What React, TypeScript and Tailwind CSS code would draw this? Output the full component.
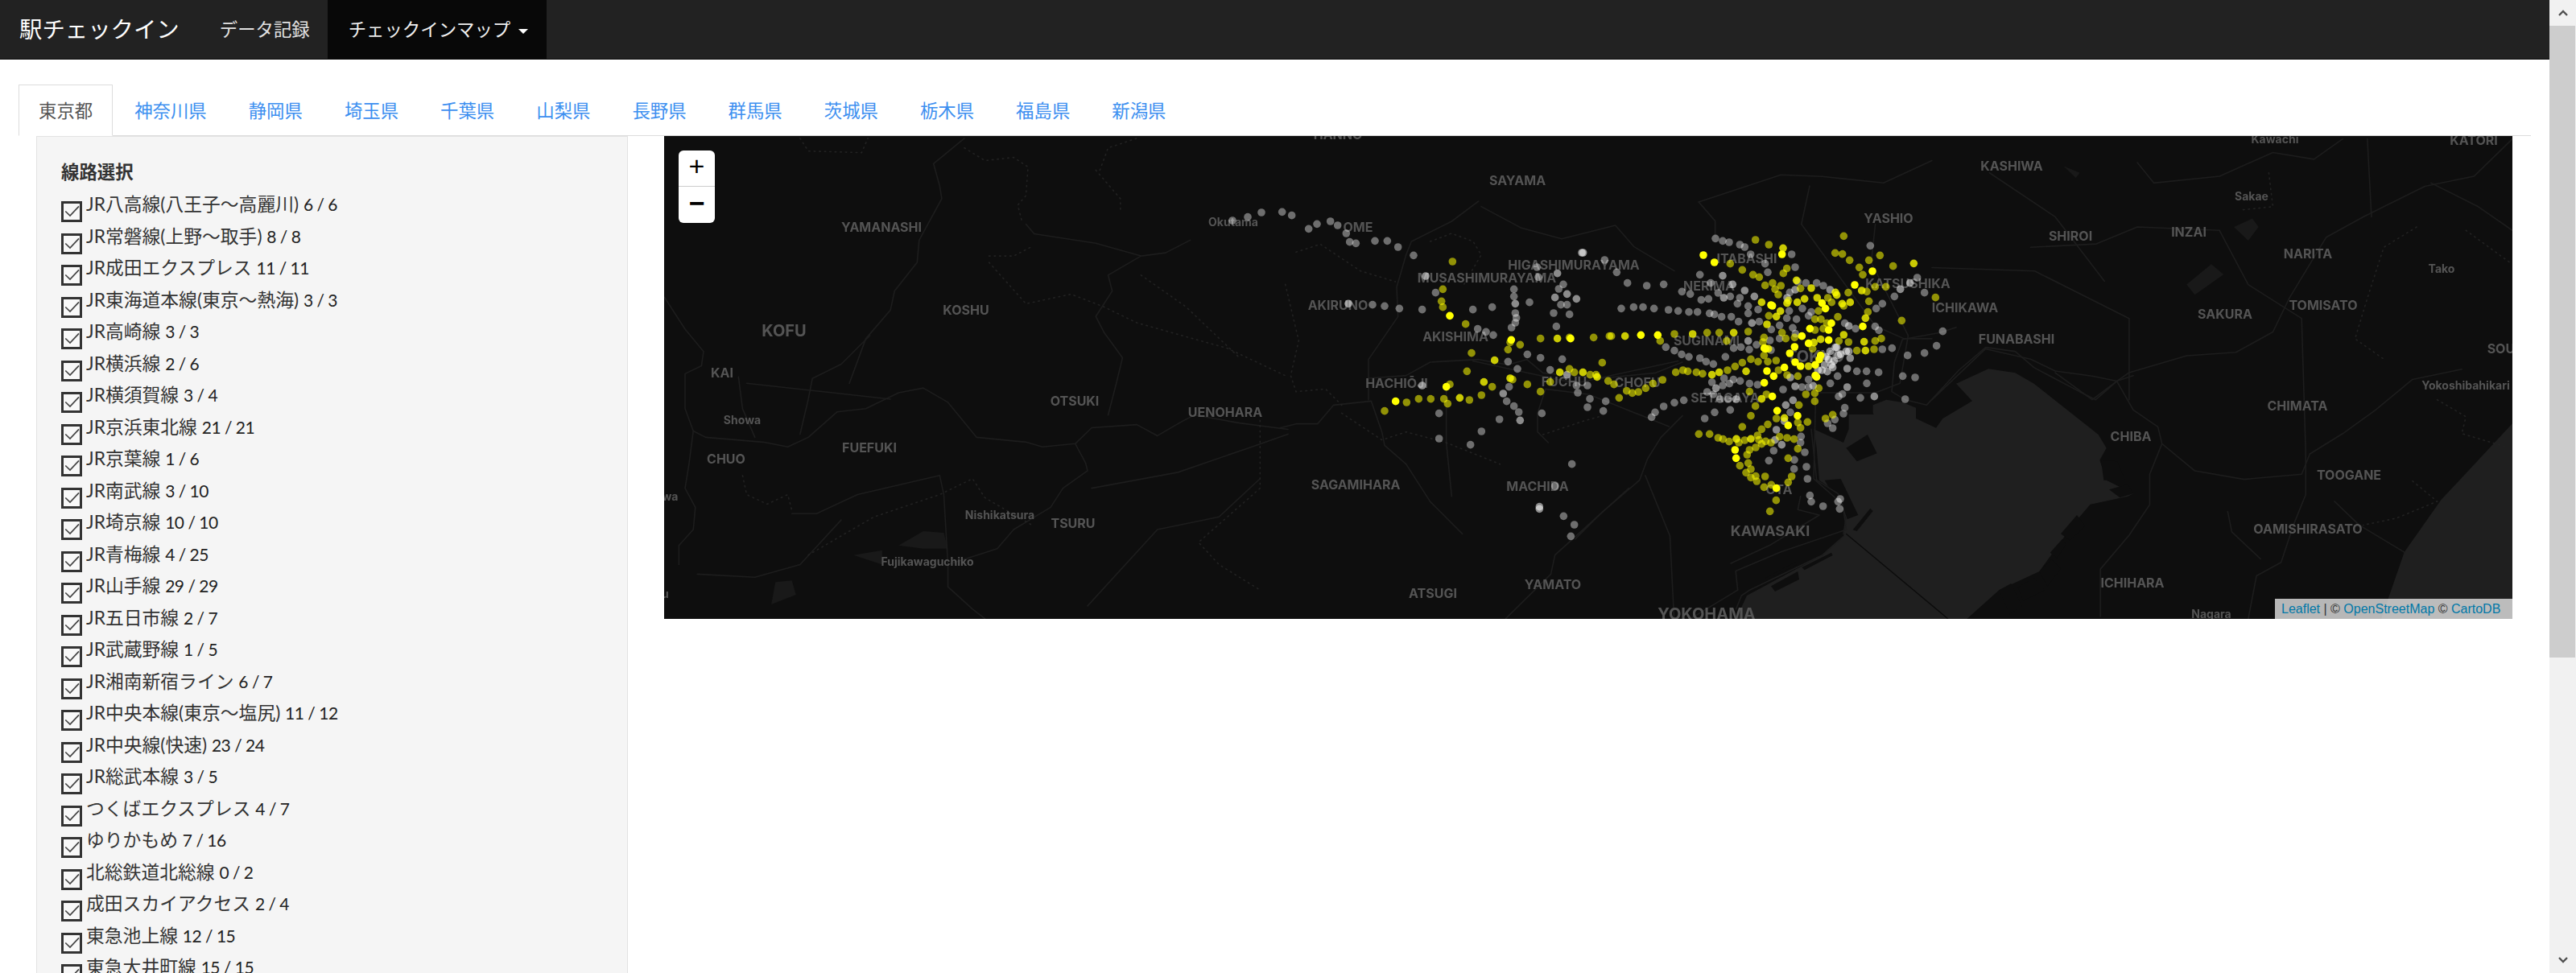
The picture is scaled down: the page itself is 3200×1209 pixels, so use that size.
const prefectures = ["東京都", "神奈川県", "静岡県", "埼玉県", "千葉県", "山梨県", "長野県", "群馬県", "茨城県", "栃木県", "福島県", "新潟県"]

const lines = [
  ["JR八高線(八王子～高麗川)", "6 / 6"],
  ["JR常磐線(上野～取手)", "8 / 8"],
  ["JR成田エクスプレス", "11 / 11"],
  ["JR東海道本線(東京～熱海)", "3 / 3"],
  ["JR高崎線", "3 / 3"],
  ["JR横浜線", "2 / 6"],
  ["JR横須賀線", "3 / 4"],
  ["JR京浜東北線", "21 / 21"],
  ["JR京葉線", "1 / 6"],
  ["JR南武線", "3 / 10"],
  ["JR埼京線", "10 / 10"],
  ["JR青梅線", "4 / 25"],
  ["JR山手線", "29 / 29"],
  ["JR五日市線", "2 / 7"],
  ["JR武蔵野線", "1 / 5"],
  ["JR湘南新宿ライン", "6 / 7"],
  ["JR中央本線(東京～塩尻)", "11 / 12"],
  ["JR中央線(快速)", "23 / 24"],
  ["JR総武本線", "3 / 5"],
  ["つくばエクスプレス", "4 / 7"],
  ["ゆりかもめ", "7 / 16"],
  ["北総鉄道北総線", "0 / 2"],
  ["成田スカイアクセス", "2 / 4"],
  ["東急池上線", "12 / 15"],
  ["東急大井町線", "15 / 15"],
]

// traced from crops of the map: [left, top, x scale, y scale]
type View = [number, number, number, number]
const WEST: View = [800, 160, 1.96, 2.53]
const MID: View = [1600, 160, 1.96, 2.53]
const EAST: View = [2400, 160, 1.96, 2.376]
const DOTS_W: View = [1590, 250, 3, 3]
const DOTS_C: View = [2000, 260, 3, 3]
const BAY: View = [2150, 400, 3, 3]

function pts(v: View, s: string) {
  return s.trim().split(/\s+/).map((p) => {
    const [a, b] = p.split(",")
    return [v[0] + Number(a) / v[2], v[1] + Number(b) / v[3]]
  })
}
const poly = (v: View, s: string) => pts(v, s).map((p) => p.join(",")).join(" ")

const roads: [View, string][] = [
  [WEST, "120,950 150,970 290,985 350,1000 400,970 470,890 540,880 620,830 680,815 740,860 810,970 930,985 970,1000 1050,990 1090,940 1200,930 1250,965 1310,920 1340,900 1450,925 1568,945"],
  [WEST, "50,530 100,630 145,700 140,745 100,770 100,880 120,950 110,1050 100,1130 125,1190 120,1260 85,1310 85,1370"],
  [WEST, "550,650 480,740 410,785 400,850 380,960"],
  [WEST, "780,30 705,110 720,180 725,220 670,350 665,420 610,510 600,570 540,660 500,800"],
  [WEST, "1050,990 1075,1050 1080,1075 1020,1130 990,1190 900,1260 860,1320 740,1370 740,1440 800,1510 830,1540"],
  [WEST, "1330,350 1270,390 1210,400 1130,460 1140,510 1100,590 1120,640 1165,720 1150,800 1130,900"],
  [WEST, "230,780 240,880 270,970"],
  [WEST, "250,800 460,830 600,850"],
  [WEST, "930,300 950,330 1100,360 1210,400"],
  [WEST, "360,1210 420,1210 520,1150 720,1090 730,1150 740,1370"],
  [WEST, "130,1400 270,1410 380,1370 480,1230"],
  [WEST, "1090,1130 1300,1080 1480,1000 1568,960"],
  [WEST, "1080,1500 1250,1260 1400,1220 1500,1100"],
  [DOTS_W, "0,845 60,830 140,830 200,760 340,745 380,860 390,910 470,980 560,1120 680,1240"],
  [DOTS_W, "740,0 640,75 490,150 470,200 435,320 440,430 330,590 330,740"],
  [DOTS_W, "330,660 470,650 560,600 740,590 850,610 920,590 980,640 1200,660 1400,640 1500,600"],
  [DOTS_W, "750,20 900,100 1050,140 1250,90 1320,170 1470,260"],
  [DOTS_W, "1500,800 1420,880 1370,960 1340,1040 1200,1160 1100,1260"],
  [DOTS_W, "1450,840 1150,720 990,700 960,790 960,860 1000,900"],
  [DOTS_W, "620,700 620,900 640,1100"],
  [MID, "1000,230 1200,145 1300,150 1450,170 1568,100"],
  [MID, "1000,230 1040,290 1040,340"],
  [MID, "1270,180 1250,300 1430,620 1500,660 1568,660"],
  [MID, "1430,300 1420,420 1510,650 1490,800 1430,830 1285,830"],
  [MID, "1285,830 1280,1100 1350,1180 1360,1260 1200,1330 1090,1390 1095,1450 980,1540"],
  [MID, "870,1090 930,1280 940,1540"],
  [MID, "830,1130 650,1340 640,1400 530,1540"],
  [MID, "950,730 700,800 450,730"],
  [BAY, "640,65 610,150 600,260 650,290 730,310 850,180 950,95 1060,110 1130,170 1300,260 1360,290 1440,220 1500,200"],
  [BAY, "840,20 780,40 640,65"],
  [BAY, "420,790 430,730 400,640 320,590 300,400"],
  [BAY, "420,800 340,870 70,1000 40,1020 20,1070"],
  [BAY, "0,900 150,830 330,720 250,700 260,650"],
  [EAST, "0,800 130,650 240,680 300,715 390,730 450,745 480,720 620,670 740,660 830,600 870,500 960,320 1050,260 1200,170 1320,140 1413,30"],
  [EAST, "450,745 390,800 300,720"],
  [EAST, "450,745 490,830 550,880 560,930 530,1020 530,1110 480,1200 410,1300 410,1440"],
  [EAST, "560,930 640,1010 760,1035 900,1020 920,960 1000,900 1080,830 1170,740 1290,710"],
  [EAST, "910,960 910,1080 880,1170 850,1280 790,1320 770,1447"],
  [EAST, "720,1130 730,1190 800,1270"],
  [EAST, "1215,160 1330,230 1413,300"],
  [EAST, "1060,30 1070,260"],
  [EAST, "980,1100 1040,1170 1150,1250"],
  [EAST, "500,100 540,160 700,140 830,70 930,90 1000,30"],
  [EAST, "240,350 400,340 500,290 700,300"],
  [EAST, "0,410 250,420 480,560 480,800"],
  [EAST, "140,130 300,260 420,450"],
  [EAST, "700,300 770,460 900,560 910,960"],
]

const trails: [View, string][] = [
  [WEST, "380,30 400,70 530,75 545,30"],
  [WEST, "780,60 830,100 900,90 935,120 930,210 910,240 920,290"],
  [WEST, "1110,130 1130,60 1200,30"],
  [WEST, "1100,130 1160,220 1160,260"],
  [WEST, "840,400 900,400 945,370"],
  [WEST, "840,420 930,550 1040,520 1120,560 1200,610 1420,690 1568,780"],
  [WEST, "1210,460 1320,560 1450,720"],
  [WEST, "240,1090 250,1150 300,1180 350,1150 360,1200"],
  [WEST, "400,1340 560,1220 720,1150 800,1100 830,1160 950,1250"],
  [WEST, "1500,900 1500,1130 1350,1300 1400,1370 1500,1450"],
  [DOTS_W, "60,190 150,160 300,260 430,300"],
  [DOTS_W, "20,310 70,520 40,650 60,710 170,700 230,760"],
  [DOTS_W, "230,790 380,890 470,860 620,900 820,980"],
  [DOTS_W, "560,150 640,120 720,150 750,200 680,320"],
  [DOTS_W, "980,870 1130,820 1200,800"],
  [EAST, "1180,290 1100,350 1060,500 1030,620 1100,680"],
  [EAST, "1300,300 1413,400"],
  [EAST, "820,130 830,230 750,240"],
  [EAST, "1170,1040 1230,1100 1130,1150 1050,1170"],
  [EAST, "1230,800 1300,850 1290,900 1400,940"],
]

const water: [View, string][] = [
  [BAY, "310,400 320,470 330,590 400,640 430,730 420,800 340,870 60,1020 20,1107 880,1107 1000,1000 1150,930 1280,750 1340,680 1480,650 1500,640 1400,590 1375,515 1400,470 1370,420 1130,230 1060,190 960,175 840,230 900,295 790,360 765,395 690,360 690,320 640,300 580,290 530,310 530,340 575,410 540,345 440,345 440,400 420,450"],
  [EAST, "1413,870 1240,1095 1150,1250 1110,1390 1090,1460 1413,1460"],
]

const lakes: [View, string][] = [
  [WEST, "620,1310 680,1265 730,1270 740,1320 680,1320"],
  [WEST, "510,1340 580,1325 580,1370"],
  [WEST, "320,1425 360,1420 370,1465 310,1495"],
  [EAST, "735,290 780,265 795,290 770,330"],
  [EAST, "620,460 680,400 710,430 640,490"],
  [EAST, "320,110 360,130 350,145"],
]

const islands = [
  "430,470 510,420 545,490 470,520",
  "350,590 410,585 475,720 435,735",
  "455,775 520,695 530,705 470,780",
  "150,985 250,930 255,960 165,1005",
  "130,955 240,895 245,905 135,960",
  "265,915 375,860 380,870 275,925",
  "1070,990 1130,955 1170,1000 1090,1040",
  "1000,1000 1045,975 1085,1060 1040,1090",
  "1150,930 1195,885 1230,920 1180,985",
  "1190,860 1235,810 1250,830 1215,880",
  "1230,790 1290,720 1320,760 1265,815",
  "1380,515 1440,520 1470,590 1390,590",
  "1410,625 1480,605 1500,640 1450,655",
]

const grayW = "8,40 44,53 107,103 138,85 188,75 215,90 247,120 260,152 283,157 354,148 400,148 440,171 498,202 580,341 345,386 390,391 445,400 530,404 719,404 791,395 737,476 768,487 795,499 872,328 872,355 877,417 881,435 877,453 863,471 930,377 958,246 963,283 1056,310 1039,327 1047,386 1070,386 1020,417 1079,422 1030,467 1210,219 922,571 971,584 850,598 885,625 1052,589 1007,629 1105,687 1146,687 1110,714 1155,737 1214,746 1146,768 1205,782 854,692 845,746 872,764 890,786 818,813 976,791 593,791 751,858 593,885 710,908 1088,980 1025,1062 1057,1174 1097,1206 1084,1249 -177,72 -120,59 -69,42"
const lightW = "543,279 255,382 877,382 1034,269 1025,359 1070,346 1105,364 1125,192 1130,192 1070,647 832,717 895,817 967,1139 967,1147 530,687"
const brightW = "633,427 862,517 1083,512 620,692 431,746"
const midW = "1034,512 800,593 1129,638 1043,638 760,674 670,733 858,660 1182,655"
const dimW = "643,225 607,328 602,373 607,395 692,458 858,526 850,553 895,535 971,512 1079,508 1169,508 1228,503 714,566 1201,602 1079,625 1097,638 1156,647 1178,647 697,634 633,683 791,692 867,665 922,683 1007,674 1223,670 971,710 390,782 472,750 517,737 562,737 611,737 625,755 706,741 751,723"

const grayC = "393,109 420,118 444,123 484,132 502,141 524,168 578,203 588,235 690,216 677,168 335,244 25,235 65,275 137,285 200,280 268,307 299,316 375,275 403,312 448,325 484,330 340,338 367,334 475,352 515,361 552,374 515,388 42,370 88,365 123,365 164,370 218,375 254,379 294,383 326,383 371,388 389,392 416,401 452,401 479,419 556,419 601,448 632,433 208,514 240,527 267,541 294,550 335,555 358,568 385,577 430,550 461,518 488,514 519,523 546,505 596,489 632,482 600,525 659,406 695,410 681,442 691,464 717,370 668,379 740,397 750,383 970,136 670,310 700,270 730,275 770,275 795,285 875,425 915,445 988,437 1002,451 1015,352 992,370 1060,325 1172,311 1145,255 1240,455 1217,509 1172,536 1109,545 1015,522 1051,518 1137,627 1091,622 1001,608 956,604 920,604 848,622 821,649 957,649 866,689 852,698 933,703 1100,708 875,740 870,762 838,784 811,798 830,816 380,645 425,630 460,635 485,640 420,657 445,650 520,650 550,654 645,672 715,663 740,663 740,635 362,681 385,690 410,708 440,708 275,712 240,721 200,735 168,757 155,775 448,748 390,757 353,780 672,757 610,900 592,937 712,847 710,870 726,906 687,934 732,960 686,968 736,1005 745,1067 750,1090 794,1107 858,1080 850,1090 856,1117"
const lightC = "420,248 457,280 502,303 538,325 424,330 529,424 515,491 690,300 660,330 820,300 890,435 1082,298 1118,275 884,594 884,663 985,698 395,667 690,660 757,658 672,627 470,708 682,712 655,730 650,790 620,822 615,860 640,878 840,515 820,530 815,560 835,565 850,545 800,580 790,600 810,605 830,590 860,540 890,530 895,555 845,515 880,530 825,580 805,550 775,600"
const brightC = "348,171 389,198 641,168 178,469 115,469 605,360 600,357 575,518 580,520 912,282 825,425 803,370 942,437 978,231 785,545 780,560 765,580 765,620 770,625 575,647 605,698 623,751 699,770 664,806 470,928 466,897 620,1040 690,570 710,585 740,500 815,488 815,450 745,445 715,473 688,513 670,537 650,590 610,622 585,603 790,350"
const midC = "645,145 56,473 308,465 461,460 1132,202 565,707 525,856 471,856 650,778 740,585 760,497 785,485 507,604 407,608 380,617 565,347 585,429 695,265 750,294 772,330 725,334 698,347 660,350 635,380 620,400 840,310 845,320 865,352 895,347 938,303 952,406 871,468 947,494 952,527 590,520"
const dimC = "542,114 592,132 448,203 493,226 533,244 556,253 646,239 659,221 578,284 606,275 637,285 615,298 627,318 710,295 665,340 592,397 515,456 362,460 407,460 435,491 240,465 187,491 5,473 871,100 839,163 866,167 893,190 929,217 942,244 965,190 1006,172 1055,212 1213,329 988,289 1028,289 957,307 888,311 965,343 961,383 1087,415 812,330 826,347 777,379 849,401 764,410 786,410 871,360 853,491 889,495 988,491 1011,482 920,527 984,522 641,460 655,482 688,478 764,450 795,445 808,425 755,520 574,478 570,495 574,545 552,568 588,568 619,564 525,559 493,572 466,586 438,600 628,600 660,618 700,622 583,690 520,680 542,734 525,770 493,811 345,613 322,608 290,604 272,600 245,608 196,636 160,650 133,667 106,681 83,685 62,677 34,703 15,653 763,686 763,716 778,667 730,690 704,730 620,780 588,802 565,820 736,793 700,795 710,815 803,780 830,766 331,838 371,838 403,852 421,857 444,866 480,870 502,861 550,843 555,860 565,875 580,865 600,870 632,848 660,852 686,857 700,893 543,888 520,897 511,915 515,946 525,969 507,982 525,1000 543,995 547,1014 578,996 574,1036 601,1027 664,1018 677,996 664,928 619,1085 596,1126 484,956"

const dotGroups: [string, number, View, string][] = [
  ["#ffffff", 0.4, DOTS_W, grayW],
  ["#ffffff", 0.4, DOTS_C, grayC],
  ["#ffffff", 0.52, DOTS_W, lightW],
  ["#ffffff", 0.52, DOTS_C, lightC],
  ["#ffff00", 0.55, DOTS_W, dimW],
  ["#ffff00", 0.55, DOTS_C, dimC],
  ["#ffff00", 0.78, DOTS_W, midW],
  ["#ffff00", 0.78, DOTS_C, midC],
  ["#ffff00", 1, DOTS_W, brightW],
  ["#ffff00", 1, DOTS_C, brightC],
]

const labels: [string, number, number, number?][] = [
  ["YAMANASHI", 1095, 282], ["KOSHU", 1200, 385], ["KOFU", 974, 411, 20], ["KAI", 897, 463], ["Showa", 922, 521, 14],
  ["OTSUKI", 1335, 498], ["UENOHARA", 1522, 512], ["FUEFUKI", 1080, 556], ["CHUO", 902, 570], ["Ichikawa", 812, 616, 14],
  ["Minobu", 805, 737, 14], ["Nishikatsura", 1242, 639, 14], ["TSURU", 1333, 650], ["Fujikawaguchiko", 1152, 697, 14],
  ["FUJIYOSHIDA", 1193, 775], ["Okutama", 1532, 275, 14], ["HANNO", 1662, 167], ["SAYAMA", 1885, 224], ["OME", 1687, 282],
  ["HIGASHIMURAYAMA", 1955, 329], ["MUSASHIMURAYAMA", 1847, 345], ["ITABASHI", 2170, 321], ["YASHIO", 2346, 271],
  ["NERIMA", 2123, 355], ["KATSUSHIKA", 2370, 352], ["ICHIKAWA", 2441, 382], ["AKIRUNO", 1662, 379], ["AKISHIMA", 1808, 418],
  ["SUGINAMI", 2120, 423], ["TOKYO", 2255, 443, 20], ["HACHIŌJI", 1735, 476], ["FUCHU", 1943, 474], ["CHOFU", 2034, 475],
  ["SETAGAYA", 2143, 494], ["SAGAMIHARA", 1684, 602], ["MACHIDA", 1910, 604], ["OTA", 2210, 608], ["KAWASAKI", 2199, 659, 18],
  ["YAMATO", 1929, 726], ["ATSUGI", 1780, 737], ["YOKOHAMA", 2120, 763, 20], ["Kawachi", 2826, 172, 14], ["KATORI", 3073, 174],
  ["KASHIWA", 2499, 206], ["Sakae", 2797, 243, 14], ["SHIROI", 2572, 293], ["INZAI", 2719, 288], ["NARITA", 2867, 315],
  ["Tako", 3033, 333, 14], ["TOMISATO", 2886, 379], ["SAKURA", 2764, 390], ["FUNABASHI", 2505, 421], ["SOUSA", 3118, 433],
  ["Yokoshibahikari", 3063, 478, 14], ["CHIMATA", 2854, 504], ["CHIBA", 2647, 542], ["TOOGANE", 2918, 590],
  ["OAMISHIRASATO", 2867, 657], ["ICHIHARA", 2649, 724], ["Nagara", 2747, 762, 14],
]

function TokyoMap() {
  return (
    <svg viewBox="825 169 2296 600" className="absolute inset-0 h-full w-full">
      <rect x="825" y="169" width="2296" height="600" fill="#0e0e0e" />
      {water.map(([v, s], i) => (
        <polygon key={i} points={poly(v, s)} fill="#1f1f1f" />
      ))}
      {lakes.map(([v, s], i) => (
        <polygon key={i} points={poly(v, s)} fill="#191919" />
      ))}
      {islands.map((s, i) => (
        <polygon key={i} points={poly(BAY, s)} fill="#0e0e0e" />
      ))}
      <g fill="none" stroke="#1d1d1d" strokeWidth="1.6" strokeLinejoin="round" strokeLinecap="round">
        {roads.map(([v, s], i) => (
          <polyline key={i} points={poly(v, s)} />
        ))}
      </g>
      <g fill="none" stroke="#222222" strokeWidth="1.6" strokeDasharray="1.5 5" strokeLinecap="round">
        {trails.map(([v, s], i) => (
          <polyline key={i} points={poly(v, s)} />
        ))}
      </g>
      <polyline points={poly(BAY, "430,790 810,1107")} fill="none" stroke="#0b0b0b" strokeWidth="1.4" />
      <g className="fill-[#545454] font-['Inter',sans-serif] font-bold blur-[0.6px]" textAnchor="middle" dominantBaseline="central">
        {labels.map(([t, x, y, size]) => (
          <text key={t} x={x} y={y} fontSize={size ?? 16}>{t}</text>
        ))}
      </g>
      {dotGroups.map(([fill, op, v, s], i) => (
        <g key={i} fill={fill} fillOpacity={op}>
          {pts(v, s).map(([x, y], j) => (
            <circle key={j} cx={x} cy={y} r="4.8" />
          ))}
        </g>
      ))}
    </svg>
  )
}

function Chevron({ d }: { d: string }) {
  return (
    <svg viewBox="0 0 12 8" className="h-2 w-3">
      <path d={d} fill="none" stroke="#505050" strokeWidth="2.4" />
    </svg>
  )
}

export default function App() {
  return (
    <div className="flex h-[1209px] w-[3200px] overflow-hidden bg-white font-['Lato','Noto_Sans_CJK_JP',sans-serif] text-[22.4px] text-[#333]">
      <div className="w-[3167px] shrink-0">
        <nav className="flex h-[74px] items-stretch border-b border-[#080808] bg-[#222]">
          <a className="ml-6 mr-[50px] self-center text-[28.4px] text-white">駅チェックイン</a>
          <a className="mr-[22px] self-center text-[#e2e2e2]">データ記録</a>
          <a className="flex w-[272px] items-center bg-[#080808] pl-[26px] text-[#f0f0f0]">
            チェックインマップ
            <span className="ml-[10px] mt-1 border-x-[6px] border-t-[6px] border-x-transparent border-t-white" />
          </a>
        </nav>

        <div className="px-[23px]">
          <ul className="flex h-[95px] items-end border-b border-[#ddd]">
            {prefectures.map((p, i) => (
              <li key={p} className="-mb-px mr-[2px]">
                {i === 0 ? (
                  <a className="block border border-b-white border-[#ddd] bg-white px-6 pb-[14px] pt-[16px] leading-[32px] text-[#555]">{p}</a>
                ) : (
                  <a className="block border border-transparent px-6 pb-[14px] pt-[16px] leading-[32px] text-[#3d8ff0]">{p}</a>
                )}
              </li>
            ))}
          </ul>

          <div className="flex items-start pl-[22px]">
            <div className="h-[1100px] w-[735px] shrink-0 border border-[#e3e3e3] bg-[#f5f5f5] pl-[30px] pt-[28px]">
              <h4 className="mb-[9px] font-bold leading-[32px]">線路選択</h4>
              {lines.map(([name, count]) => (
                <label key={name} className="flex h-[39.5px] items-start">
                  <span className="mt-[11px] flex h-[26px] w-[26px] shrink-0 items-center justify-center border-[3px] border-[#333] bg-[#f8f8f8]">
                    <svg viewBox="0 0 20 20" className="h-5 w-5">
                      <path d="M2.3 9.5 8 15 19 3.3" fill="none" stroke="#444" strokeWidth="1.7" />
                    </svg>
                  </span>
                  <span className="-mt-[2px] ml-[5px] whitespace-nowrap text-[22.8px] leading-[32px]">
                    {name} <span className="text-[21px] tracking-[-0.5px] text-[#222]">{count}</span>
                  </span>
                </label>
              ))}
            </div>

            <div className="relative ml-[45px] h-[600px] w-[2296px] shrink-0 overflow-hidden bg-[#0e0e0e]">
              <TokyoMap />
              <div className="absolute left-[18px] top-[18px] flex h-[90px] w-[45px] flex-col rounded-md bg-white font-['Liberation_Mono',monospace] text-black">
                <a className="flex h-[45px] items-center justify-center border-b border-[#ccc] text-[34px] leading-none">+</a>
                <a className="flex h-[45px] items-center justify-center text-[34px] font-bold leading-none">−</a>
              </div>
              <div className="absolute bottom-0 right-0 flex h-[25px] w-[295px] items-center whitespace-nowrap bg-white/70 pl-2 font-['Liberation_Sans',sans-serif] text-[16px] text-[#333]">
                <a className="text-[#0078a8]">Leaflet</a>
                <span className="whitespace-pre"> | © </span>
                <a className="text-[#0078a8]">OpenStreetMap</a>
                <span className="whitespace-pre"> © </span>
                <a className="text-[#0078a8]">CartoDB</a>
              </div>
            </div>
          </div>
        </div>
      </div>

      <div className="flex w-[33px] flex-col bg-[#f1f1f1]">
        <div className="flex h-8 items-center justify-center">
          <Chevron d="M1 7 6 2l5 5" />
        </div>
        <div className="h-[785px] w-[32px] bg-[#cdcdcd]" />
        <div className="flex-1" />
        <div className="flex h-8 items-center justify-center">
          <Chevron d="M1 1l5 5 5-5" />
        </div>
      </div>
    </div>
  )
}
